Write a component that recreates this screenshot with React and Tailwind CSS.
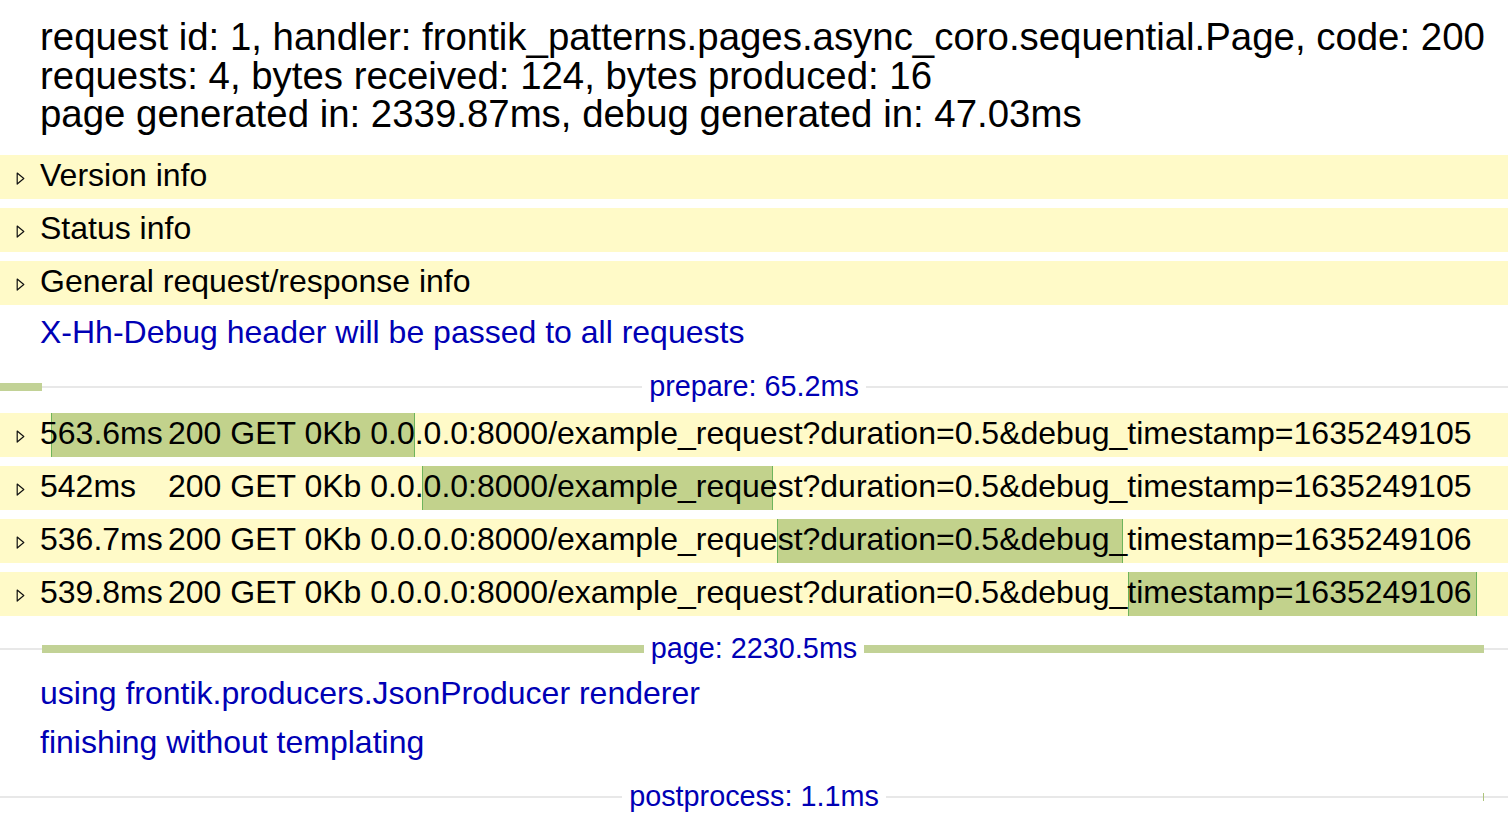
import React from 'react';

const font = { fontFamily: '"Liberation Sans", Arial, sans-serif' };

const sections = ['Version info', 'Status info', 'General request/response info'];

// bar positions in px on the page timeline
const requests = [
    { time: '563.6ms', ts: '1635249105', left: 51, width: 364 },
    { time: '542ms', ts: '1635249105', left: 422, width: 351 },
    { time: '536.7ms', ts: '1635249106', left: 777, width: 346 },
    { time: '539.8ms', ts: '1635249106', left: 1128, width: 349 },
];

function Arrow() {
    return (
        <svg className="w-[9px] h-[13px] ml-[16px] mr-[15px] mt-[7px] shrink-0" viewBox="0 0 9 13">
            <path d="M1.2 1 L7.8 6.5 L1.2 12 Z" fill="none" stroke="#111" strokeWidth="1.2" strokeLinejoin="round" />
        </svg>
    );
}

function Section({ title }) {
    return (
        <div className="h-[44px] pb-[4px] bg-[#fffac8] flex items-center text-[32px] text-black">
            <Arrow />
            <span>{title}</span>
        </div>
    );
}

function RequestRow({ r }) {
    return (
        <div className="relative h-[44px] pb-[4px] bg-[#fffac8] flex items-center text-[32px] text-black">
            <div
                className="absolute top-0 bottom-0 bg-[#c2d28c] border-l border-r border-[#6db45c]"
                style={{ left: r.left, width: r.width }}
            />
            <Arrow />
            <span className="relative whitespace-nowrap flex">
                <span className="w-[128px]">{r.time}</span>
                <span>200 GET 0Kb 0.0.0.0:8000/example_request?duration=0.5&amp;debug_timestamp={r.ts}</span>
            </span>
        </div>
    );
}

function Stage({ label, left, width, thin }) {
    return (
        <div className="relative mt-[11px] h-[44px] pb-[2px] flex items-center justify-center">
            <div className="absolute left-0 right-0 top-[21px] h-[2px] bg-[#e8e8e8]" />
            <div
                className={`absolute top-[18px] h-[8px] ${thin ? 'bg-[#aec47c]' : 'bg-[#c2d296]'}`}
                style={{ left, width }}
            />
            <span className="relative bg-white px-[7px] text-[28.8px] leading-[36px] text-[#0000b5]">{label}</span>
        </div>
    );
}

function LogLine({ children, className = '' }) {
    return (
        <div className={`h-[44px] leading-[44px] pl-[40px] text-[32px] text-[#0000b5] ${className}`}>{children}</div>
    );
}

export default function App() {
    return (
        <div className="w-[1508px] h-[822px] bg-white overflow-hidden flex flex-col" style={font}>
            <div className="pt-[18px] pl-[40px] text-[38.4px] leading-[38.5px] text-black whitespace-nowrap">
                <div>request id: 1, handler: frontik_patterns.pages.async_coro.sequential.Page, code: 200</div>
                <div>requests: 4, bytes received: 124, bytes produced: 16</div>
                <div>page generated in: 2339.87ms, debug generated in: 47.03ms</div>
            </div>

            <div className="mt-[21.5px] flex flex-col gap-[9px]">
                {sections.map((s) => (
                    <Section key={s} title={s} />
                ))}
            </div>

            <LogLine className="mt-[5px]">X-Hh-Debug header will be passed to all requests</LogLine>

            <Stage label="prepare: 65.2ms" left={0} width={42} />

            <div className="mt-[4px] flex flex-col gap-[9px]">
                {requests.map((r, i) => (
                    <RequestRow key={i} r={r} />
                ))}
            </div>

            <Stage label="page: 2230.5ms" left={42} width={1442} />

            <div className="flex flex-col gap-[5px]">
                <LogLine>using frontik.producers.JsonProducer renderer</LogLine>
                <LogLine>finishing without templating</LogLine>
            </div>

            <Stage label="postprocess: 1.1ms" left={1483} width={1} thin />
        </div>
    );
}
